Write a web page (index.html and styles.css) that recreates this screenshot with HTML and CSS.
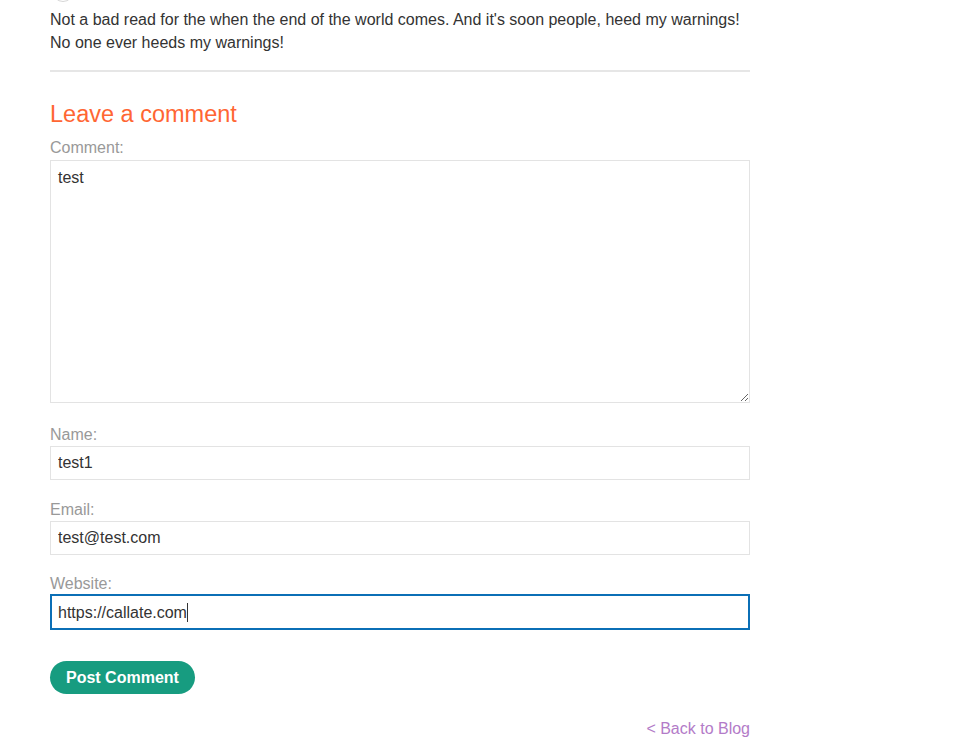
FILE: index.html
```html
<!DOCTYPE html>
<html lang="en">
<head>
<meta charset="utf-8">
<title>Leave a comment</title>
<link rel="stylesheet" href="styles.css">
</head>
<body>
<main class="page">
  <div class="comment-item">
    <div class="avatar"></div>
    <p class="comment-text">Not a bad read for the when the end of the world comes. And it's soon people, heed my warnings! No one ever heeds my warnings!</p>
  </div>
  <hr class="divider">
  <section class="comment-form">
    <h2 class="form-title">Leave a comment</h2>
    <div class="field field-comment">
      <label class="field-label" for="c">Comment:</label>
      <textarea id="c" class="field-textarea">test</textarea>
    </div>
    <div class="field field-name">
      <label class="field-label" for="n">Name:</label>
      <input id="n" class="field-input" type="text" value="test1">
    </div>
    <div class="field field-email">
      <label class="field-label" for="e">Email:</label>
      <input id="e" class="field-input" type="text" value="test@test.com">
    </div>
    <div class="field field-website">
      <label class="field-label">Website:</label>
      <div class="field-input is-focused">https://callate.com<span class="caret"></span></div>
    </div>
    <button class="btn-post" type="button">Post Comment</button>
    <div class="back-row"><a class="back-link" href="#">&lt; Back to Blog</a></div>
  </section>
</main>
</body>
</html>
```
FILE: styles.css
```css
html, body {
  margin: 0;
  padding: 0;
  background: #ffffff;
}
body {
  font-family: "Liberation Sans", Arial, sans-serif;
  font-size: 16px;
  color: #333333;
}
.page {
  width: 700px;
  padding-left: 50px;
}
.comment-item {
  display: flex;
  flex-direction: column;
}
.avatar {
  width: 22px;
  height: 22px;
  margin-top: -20px;
  margin-left: 2px;
  border: 1px solid #d6d6d6;
  border-radius: 50%;
  box-sizing: border-box;
}
.comment-text {
  margin: 6px 0 0;
  line-height: 23px;
  color: #333333;
}
.divider {
  margin: 16px 0 0;
  border: 0;
  height: 2px;
  background: #e6e6e6;
}
.comment-form {
  display: flex;
  flex-direction: column;
}
.form-title {
  margin: 28px 0 0;
  font-size: 23.5px;
  font-weight: normal;
  line-height: 28px;
  color: #ff6633;
}
.field {
  display: flex;
  flex-direction: column;
}
.field-label {
  color: #999999;
  line-height: 18px;
  margin-bottom: 2px;
}
.field-comment { margin-top: 11px; }
.field-comment .field-label { margin-bottom: 3px; }
.field-name { margin-top: 23px; }
.field-email { margin-top: 21px; }
.field-website { margin-top: 20px; }
.field-textarea {
  box-sizing: border-box;
  width: 700px;
  height: 243px;
  margin: 0;
  padding: 7px;
  border: 1px solid #e3e3e3;
  font-family: "Liberation Sans", Arial, sans-serif;
  font-size: 16px;
  line-height: 20px;
  color: #333333;
  resize: vertical;
  outline: none;
}
.field-input {
  box-sizing: border-box;
  width: 700px;
  height: 34px;
  margin: 0;
  padding: 0 7px;
  border: 1px solid #e3e3e3;
  font-family: "Liberation Sans", Arial, sans-serif;
  font-size: 16px;
  line-height: 32px;
  color: #333333;
  outline: none;
  background: #ffffff;
}
.field-input.is-focused {
  height: 36px;
  margin: -1px 0;
  border: 2px solid #0b6fb6;
  padding: 1px 6px 0;
  display: flex;
  align-items: center;
  line-height: 20px;
}
.caret {
  display: inline-block;
  width: 1px;
  height: 19px;
  background: #333333;
}
.btn-post {
  align-self: flex-start;
  margin-top: 32px;
  height: 33px;
  padding: 0 16px;
  border: 0;
  border-radius: 17px;
  background: #179c80;
  color: #ffffff;
  font-family: "Liberation Sans", Arial, sans-serif;
  font-size: 16px;
  font-weight: bold;
}
.back-row {
  display: flex;
  justify-content: flex-end;
  margin-top: 25px;
}
.back-link {
  color: #b37bc8;
  text-decoration: none;
  line-height: 20px;
}
```
